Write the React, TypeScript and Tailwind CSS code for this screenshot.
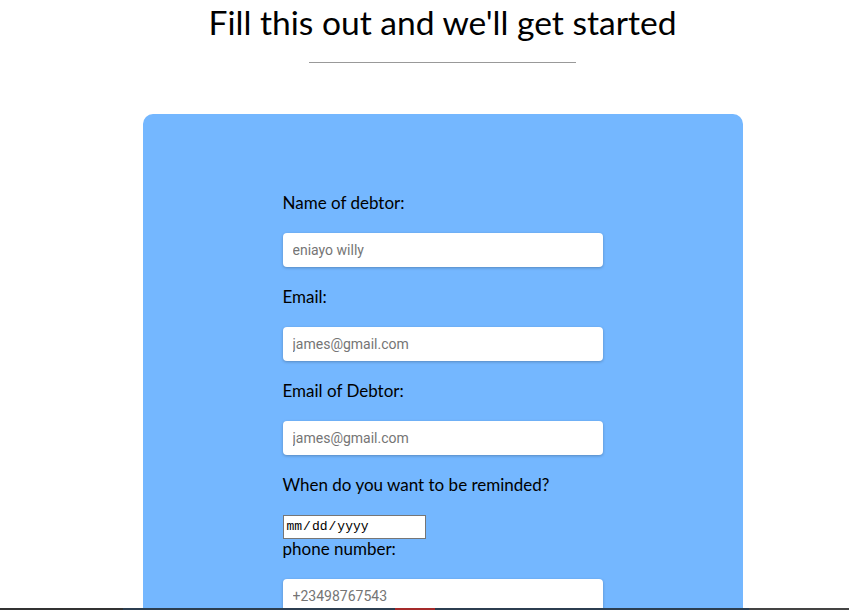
import React from "react";

const fields = [
  { label: "Name of debtor:", placeholder: "eniayo willy", type: "text" },
  { label: "Email:", placeholder: "james@gmail.com", type: "email" },
  { label: "Email of Debtor:", placeholder: "james@gmail.com", type: "email" },
];

const labelCls = "block text-[17px] leading-[20px] mb-5 text-black";
const inputCls =
  "block w-[320px] h-[34px] mb-5 rounded-[4px] bg-white px-[10px] text-[14px] text-gray-700 placeholder:text-[#757575] shadow-[0_1px_3px_rgba(0,0,0,0.25)] outline-none";

export default function App() {
  return (
    <div className="min-h-screen bg-white font-['Lato',sans-serif] pl-[36px]">
      {/* heading */}
      <div className="flex flex-col items-center pt-[2px]">
        <h1 className="text-[33.6px] leading-[40px] font-normal text-black">
          Fill this out and we'll get started
        </h1>
        <div className="mt-[20px] w-[267px] h-px bg-[#999]" />
      </div>

      {/* form card */}
      <div className="mx-auto mt-[51px] w-[600px] rounded-[10px] bg-[#74b7ff] pt-[79px] pb-[80px]">
        <form className="mx-auto w-[320px]" onSubmit={(e) => e.preventDefault()}>
          {fields.map((f) => (
            <div key={f.label}>
              <label className={labelCls}>{f.label}</label>
              <input type={f.type} placeholder={f.placeholder} className={`${inputCls} font-['Roboto',sans-serif]`} />
            </div>
          ))}
          <label className={labelCls}>When do you want to be reminded?</label>
          <input
            type="date"
            className="block w-[143px] h-[24px] border border-[#767676] bg-white px-[2px] text-[13px] font-['Liberation_Mono',monospace] text-black [&::-webkit-calendar-picker-indicator]:hidden"
          />
          <label className={labelCls}>phone number:</label>
          <input type="tel" placeholder="+23498767543" className={`${inputCls} font-['Roboto',sans-serif]`} />
          <div className="h-[60px]" />
        </form>
      </div>

      {/* bottom strip of the next section peeking in */}
      <div className="fixed bottom-0 left-0 right-0 flex h-[2px]">
        <div className="w-[123px] bg-[#333]" />
        <div className="w-[272px] bg-[#2c3e50]" />
        <div className="w-[40px] bg-[#a52a2a]" />
        <div className="flex-1 bg-[#2c3e50]" />
        <div className="w-[100px] bg-[#444]" />
      </div>
    </div>
  );
}
